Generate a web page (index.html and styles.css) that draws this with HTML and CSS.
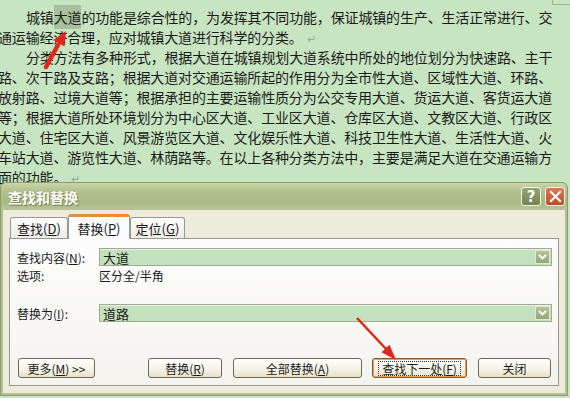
FILE: index.html
```html
<!DOCTYPE html>
<html lang="zh-CN">
<head>
  <meta charset="UTF-8" />
  <title>查找和替换</title>
  <link rel="stylesheet" href="styles.css">
</head>
<body class="screen">
  <div class="doc">
    <p class="line indent">城镇<span class="hl">大道</span>的功能是综合性的，为发挥其不同功能，保证城镇的生产、生活正常进行、交</p>
    <p class="line">通运输经济合理，应对城镇大道进行科学的分类。<span class="mark">↵</span></p>
    <p class="line indent">分类方法有多种形式，根据大道在城镇规划大道系统中所处的地位划分为快速路、主干</p>
    <p class="line">路、次干路及支路；根据大道对交通运输所起的作用分为全市性大道、区域性大道、环路、</p>
    <p class="line">放射路、过境大道等；根据承担的主要运输性质分为公交专用大道、货运大道、客货运大道</p>
    <p class="line">等；根据大道所处环境划分为中心区大道、工业区大道、仓库区大道、文教区大道、行政区</p>
    <p class="line">大道、住宅区大道、风景游览区大道、文化娱乐性大道、科技卫生性大道、生活性大道、火</p>
    <p class="line">车站大道、游览性大道、林荫路等。在以上各种分类方法中，主要是满足大道在交通运输方</p>
    <p class="line">面的功能。<span class="mark">↵</span></p>
  </div>
  <div class="corner"></div>

  <div class="dialog">
    <div class="titlebar">
      <span class="title">查找和替换</span>
      <div class="tbtns">
        <span class="tbtn help">?</span>
        <span class="tbtn close">
          <svg width="13" height="13" viewBox="0 0 13 13"><path d="M2 2 L11 11 M11 2 L2 11" stroke="#fff" stroke-width="2.2" stroke-linecap="square"/></svg>
        </span>
      </div>
    </div>
    <div class="client">
      <div class="tabs">
        <span class="tab">查找(<u>D</u>)</span>
        <span class="tab active">替换(<u>P</u>)</span>
        <span class="tab">定位(<u>G</u>)</span>
      </div>
      <div class="panel">
        <div class="row first">
          <span class="label">查找内容(<u>N</u>):</span>
          <div class="combo"><span>大道</span><span class="drop"><svg width="9" height="6" viewBox="0 0 9 6"><path d="M1 1 L4.5 4.5 L8 1" fill="none" stroke="#fff" stroke-width="1.8"/></svg></span></div>
        </div>
        <div class="row opt">
          <span class="label">选项:</span>
          <span>区分全/半角</span>
        </div>
        <div class="row repl">
          <span class="label">替换为(<u>I</u>):</span>
          <div class="combo"><span>道路</span><span class="drop"><svg width="9" height="6" viewBox="0 0 9 6"><path d="M1 1 L4.5 4.5 L8 1" fill="none" stroke="#fff" stroke-width="1.8"/></svg></span></div>
        </div>
        <div class="buttons">
          <span class="btn w-more">更多(<u>M</u>) &gt;&gt;</span>
          <span class="btn w-repl">替换(<u>R</u>)</span>
          <span class="btn w-all">全部替换(<u>A</u>)</span>
          <span class="btn w-next focus"><span class="ring">查找下一处(<u>F</u>)</span></span>
          <span class="btn w-close">关闭</span>
        </div>
      </div>
    </div>
  </div>

  <svg class="arrows" width="570" height="398" viewBox="0 0 570 398">
    <path d="M46 67 L58 45" stroke="#e0261d" stroke-width="4.5" stroke-linecap="round"/>
    <polygon points="66,31 64.5,46.5 53.2,40" fill="#e0261d"/>
    <path d="M357 318 L387 350" stroke="#e0261d" stroke-width="2.5"/>
    <polygon points="396,360 389.5,344.8 381.5,352.3" fill="#e0261d"/>
  </svg>
</body>
</html>
```

FILE: styles.css
```css
* { box-sizing: border-box; }
p { margin: 0; }

.screen {
  margin: 0;
  width: 570px;
  height: 398px;
  overflow: hidden;
  position: relative;
  background: #c7e5c1;
  font-family: "Noto Sans CJK SC", "Noto Sans", sans-serif;
  color: #1b1b1b;
}

.doc { padding-top: 7px; margin-left: -2px; }
.line {
  height: 20px;
  line-height: 20px;
  font-size: 14px;
  letter-spacing: -0.15px;
  white-space: nowrap;
}
.indent { padding-left: 28px; }
.hl { background: #a8c09c; padding: 2px 0; }
.mark { color: #98a898; font-size: 11px; margin-left: 4px; }

.corner {
  position: absolute;
  left: 552px;
  top: -1px;
  width: 20px;
  height: 6px;
  border-left: 1px solid #a3b0a0;
  border-bottom: 1px solid #a3b0a0;
}

/* dialog window */
.dialog {
  position: absolute;
  left: 0;
  top: 182px;
  width: 568px;
  height: 214px;
  background: #b3c093;
  border: 1px solid #8f9c6c;
  border-radius: 6px 6px 0 0;
  font-size: 12px;
}
.titlebar {
  height: 27px;
  display: flex;
  align-items: center;
  justify-content: space-between;
  padding: 0 2px 0 7px;
  background: linear-gradient(#cbd5a9, #b2c18f 30%, #a9b985 70%, #b8c597);
  border-radius: 6px 6px 0 0;
}
.title {
  color: #fff;
  font-weight: bold;
  font-size: 14px;
  text-shadow: 1px 1px 1px #6e7b4c;
}
.tbtns { display: flex; gap: 4px; }
.tbtn {
  width: 20px;
  height: 19px;
  border: 1px solid #f4f6ea;
  border-radius: 3px;
  display: flex;
  align-items: center;
  justify-content: center;
}
.help {
  background: linear-gradient(#93a574, #72854f);
  color: #fff;
  font-weight: bold;
  font-size: 15px;
  font-family: "DejaVu Sans", sans-serif;
}
.close { background: linear-gradient(#dc7a5a, #c24a25); }

.client {
  margin: 0 2px;
  height: 183px;
  background: #ecebdc;
  padding: 4px 0 0 6px;
}

.tabs { display: flex; height: 24px; align-items: flex-end; padding-left: 1px; }
.tab {
  height: 21px;
  padding: 0;
  display: flex;
  align-items: center;
  justify-content: center;
  white-space: nowrap;
  font-size: 13px;
  border: 1px solid #939b8f;
  border-bottom: none;
  border-radius: 3px 3px 0 0;
  background: linear-gradient(#ffffff, #ecebe4);
}
.tab:first-child { width: 58px; }
.tab.active {
  width: 62px;
  height: 25px;
  background: #fcfcfe;
  border-top: 3px solid #e5913a;
  margin-bottom: -1px;
  position: relative;
  z-index: 1;
}
.tab:last-child { width: 55px; }

.panel {
  width: 550px;
  height: 148px;
  border: 1px solid #939b8f;
  background: linear-gradient(#fdfdfd, #f4f3ee);
  padding: 9px 6px 0 7px;
}
.row { display: flex; align-items: center; height: 18px; white-space: nowrap; }
.label { width: 82px; flex: none; }
.combo {
  flex: 1;
  height: 18px;
  background: #c4e2bd;
  border: 1px solid #a1ab8f;
  box-shadow: inset 0 1px 0 #e9f1e4;
  display: flex;
  align-items: center;
  justify-content: space-between;
  padding: 0 1px 0 3px;
  font-size: 13px;
}
.drop {
  width: 15px;
  height: 14px;
  background: linear-gradient(#b7c398, #97a679);
  border: 1px solid #e3e8d6;
  display: flex;
  align-items: center;
  justify-content: center;
}
.opt { height: 19px; }
.repl { margin-top: 19px; }

.buttons { display: flex; margin-top: 36px; padding-left: 1px; }
.btn {
  height: 20px;
  border: 1px solid #6f6a56;
  border-radius: 3px;
  background: linear-gradient(#ffffff, #f5f2e4 60%, #e6e2cc);
  display: flex;
  align-items: center;
  justify-content: center;
  white-space: nowrap;
  font-size: 12px;
}
.w-more { width: 77px; margin-right: 53px; }
.w-repl { width: 74px; margin-right: 11px; }
.w-all { width: 129px; margin-right: 10px; }
.w-next { width: 95px; margin-right: 11px; }
.w-close { width: 73px; }
.focus { border-color: #8a5a2a; box-shadow: inset 0 0 0 1px #e1a35c; }
.ring { border: 1px dotted #333; padding: 0 3px; line-height: 13px; }

.arrows { position: absolute; left: 0; top: 0; pointer-events: none; }
```
